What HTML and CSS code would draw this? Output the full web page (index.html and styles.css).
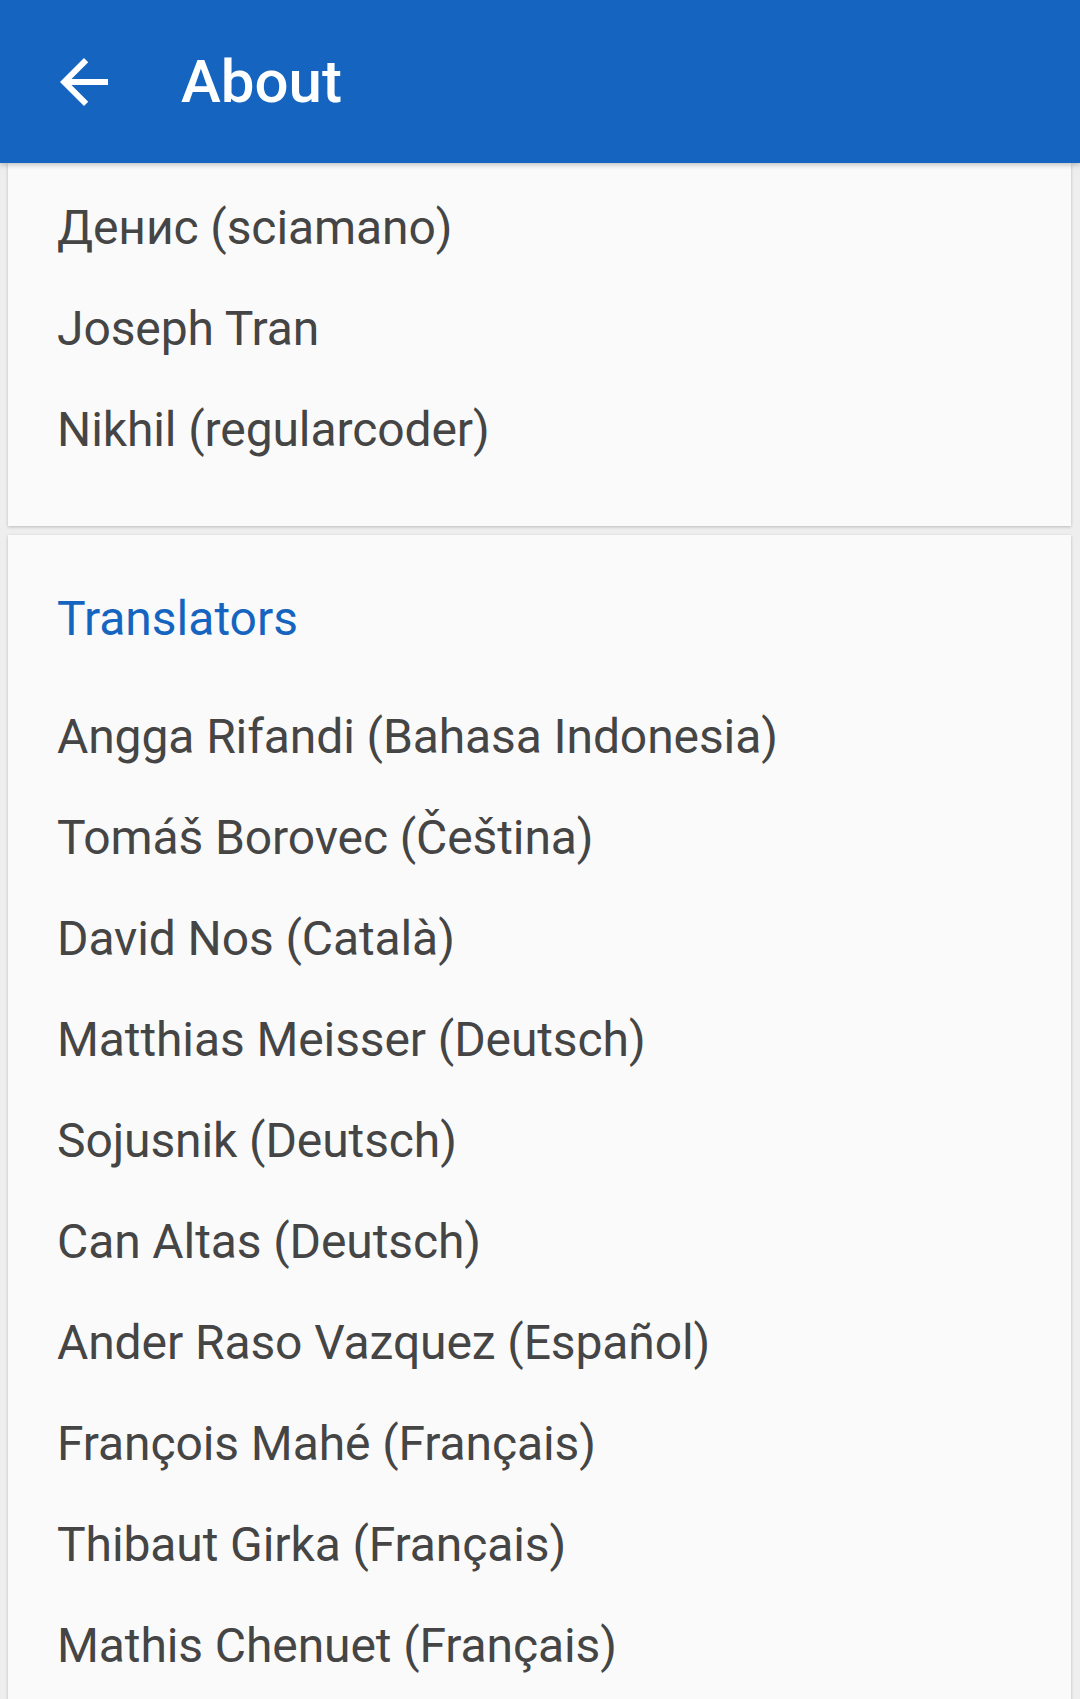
FILE: index.html
```html
<!DOCTYPE html>
<html lang="en">
<head>
<meta charset="utf-8">
<title>About</title>
<link rel="stylesheet" href="styles.css">
</head>
<body>
<header class="appbar">
  <svg class="back" viewBox="0 0 24 24" width="72" height="72" aria-hidden="true">
    <path d="M20 11H7.83l5.59-5.59L12 4l-8 8 8 8 1.41-1.41L7.83 13H20v-2z" fill="#ffffff"/>
  </svg>
  <h1 class="title">About</h1>
</header>
<main class="content">
  <section class="card card-top">
    <ul class="list">
      <li>Денис (sciamano)</li>
      <li>Joseph Tran</li>
      <li>Nikhil (regularcoder)</li>
    </ul>
  </section>
  <section class="card card-translators">
    <h2 class="heading">Translators</h2>
    <ul class="list">
      <li>Angga Rifandi (Bahasa Indonesia)</li>
      <li>Tomáš Borovec (Čeština)</li>
      <li>David Nos (Català)</li>
      <li>Matthias Meisser (Deutsch)</li>
      <li>Sojusnik (Deutsch)</li>
      <li>Can Altas (Deutsch)</li>
      <li>Ander Raso Vazquez (Español)</li>
      <li>François Mahé (Français)</li>
      <li>Thibaut Girka (Français)</li>
      <li>Mathis Chenuet (Français)</li>
    </ul>
  </section>
</main>
</body>
</html>
```
FILE: styles.css
```css
html, body {
  margin: 0;
  padding: 0;
}
body {
  background: #eeeeee;
  font-family: Roboto, "Noto Sans", "DejaVu Sans", sans-serif;
  height: 1699px;
  overflow: hidden;
}
.appbar {
  position: relative;
  z-index: 2;
  height: 163px;
  background: #1565c0;
  display: flex;
  align-items: center;
  box-shadow: 0 2px 5px rgba(0, 0, 0, 0.22);
}
.back {
  display: block;
  margin-left: 48px;
  flex: none;
}
.title {
  margin: 0 0 0 61px;
  color: #ffffff;
  font-size: 60px;
  font-weight: 500;
  line-height: normal;
}
.content {
  padding: 0 9px 0 8px;
}
.card {
  background: #fafafa;
  box-shadow: 0 1px 3px rgba(0, 0, 0, 0.22);
}
.card-top {
  padding: 14px 50px 46px 49px;
}
.card-translators {
  margin-top: 9px;
  padding: 33px 50px 200px 49px;
}
.list {
  list-style: none;
  margin: 0;
  padding: 0;
}
.list li {
  font-size: 48px;
  line-height: 101px;
  color: #454545;
  letter-spacing: -0.1px;
  white-space: nowrap;
}
.heading {
  margin: 0 0 17px;
  font-size: 48px;
  font-weight: 400;
  line-height: 101px;
  color: #1565c0;
}
```
